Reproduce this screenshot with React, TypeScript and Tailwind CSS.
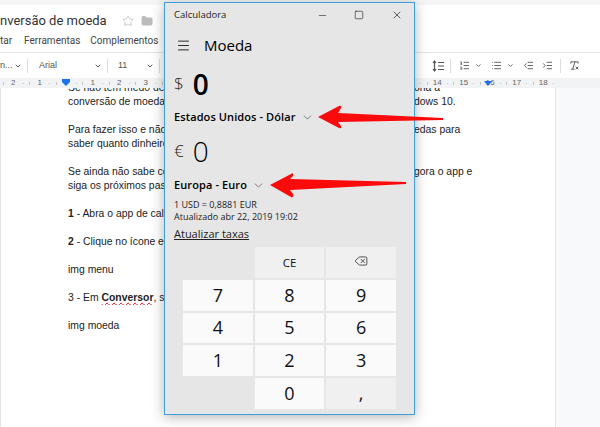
import React from "react";
import { Star, Folder, ChevronDown, Menu, Minus, Square, X, Delete, ListOrdered, List, Indent, Outdent, RemoveFormatting } from "lucide-react";

const docLines: { left: React.ReactNode; right?: string }[] = [
  { left: "Se não tem medo de errar nas contas, pode usar", right: "ona a" },
  { left: "conversão de moeda", right: "dows 10." },
  { left: "" },
  { left: "Para fazer isso e não precisar ficar buscando", right: "edas para" },
  { left: "saber quanto dinheiro" },
  { left: "" },
  { left: "Se ainda não sabe como fazer isso, abra agora", right: "gora o app e" },
  { left: "siga os próximos passos" },
  { left: "" },
  { left: <><b>1</b> - Abra o app de calculadora</> },
  { left: "" },
  { left: <><b>2</b> - Clique no ícone em</> },
  { left: "" },
  { left: "img menu" },
  { left: "" },
  { left: <>3 - Em <b className="font-bold underline decoration-wavy decoration-red-600 decoration-1">Conversor</b>, selecione</> },
  { left: "" },
  { left: "img moeda" },
];

const keys = ["", "CE", "back", "7", "8", "9", "4", "5", "6", "1", "2", "3", "", "0", ","];

function Key({ k }: { k: string }) {
  if (k === "") return <div />;
  const soft = k === "CE" || k === "back" || k === ",";
  return (
    <div className={`flex items-center justify-center ${soft ? "bg-[#f0f0f0]" : "bg-[#fafafa]"} ${k === "CE" ? "text-[11.5px]" : "text-[18px]"} font-medium text-[#111]`}>
      {k === "back" ? <Delete size={14} strokeWidth={1.2} className="mb-[2px]" /> : k}
    </div>
  );
}

const rulerCells = ["2", "1", "", "1", "2", "3", "", "", "", "", "", "", "", "", "", "", "14", "15", "16", "17", "18"];

function Ruler() {
  return (
    <div className="relative flex h-[10px] items-center overflow-hidden bg-[#f1f3f4] text-[8px] leading-[10px] text-[#666]">
      {rulerCells.map((n, i) => (
        <div key={i} className="flex w-[26.5px] flex-none items-center justify-around">
          <i className="h-[3px] w-px bg-[#c4c4c4]" />
          {n ? <span className="w-[9px] text-center">{n}</span> : <i className="w-[9px]" />}
          <i className="h-[1px] w-px bg-[#c4c4c4]" />
        </div>
      ))}
      <svg className="absolute left-[62px] top-[1px]" width="8" height="7" viewBox="0 0 8 7"><path d="M0 0H8V3L4 7L0 3Z" fill="#1a73e8" /></svg>
      <svg className="absolute left-[484px] top-[3px]" width="8" height="5" viewBox="0 0 8 5"><path d="M0 0H8L4 5Z" fill="#1a73e8" /></svg>
    </div>
  );
}

function Sep() {
  return <i className="block h-[14px] w-px flex-none bg-[#dcdcdc]" />;
}

function LineSpacing() {
  return (
    <svg width="12" height="12" viewBox="0 0 12 12" fill="none" stroke="#555" strokeWidth="1.2" className="flex-none">
      <path d="M2.5 1V11M1 3L2.5 1L4 3M1 9L2.5 11L4 9M6 2.5H12M6 6H12M6 9.5H12" />
    </svg>
  );
}

export default function App() {
  return (
    <div className="relative h-[427px] w-[600px] overflow-hidden bg-[#f8f9fa] font-['Liberation_Sans',sans-serif]">
      <div className="h-[5px] bg-[#f5f5f5]" />
      <div className="bg-white">
        <div className="flex h-[30px] items-center pt-[2px] font-['Roboto',sans-serif] text-[13px] text-[#333]">
          <span>nversão de moeda</span>
          <Star size={12} className="ml-[15px] text-[#ccc]" />
          <Folder size={12} fill="#bbb" className="ml-[7px] text-[#bbb]" />
        </div>
        <div className="flex h-[17px] items-center pb-[7px] font-['Roboto',sans-serif] text-[10px] text-[#444]">
          <span>tar</span>
          <span className="ml-[12px]">Ferramentas</span>
          <span className="ml-[10px]">Complementos</span>
          <span className="ml-[243px] text-[#888] underline">ive</span>
        </div>
      </div>
      <div className="flex h-[26px] items-center border-t border-[#e5e5e5] bg-white text-[9px] text-[#555]">
        <span className="w-[14px]">n...</span>
        <ChevronDown size={8} strokeWidth={3} className="flex-none" />
        <i className="ml-[5px]"><Sep /></i>
        <span className="ml-[11px] w-[55px]">Arial</span>
        <ChevronDown size={8} strokeWidth={3} className="flex-none" />
        <i className="ml-[5px]"><Sep /></i>
        <span className="ml-[10px] w-[28px]">11</span>
        <ChevronDown size={8} strokeWidth={3} className="flex-none" />
        <i className="ml-[5px]"><Sep /></i>
        <div className="ml-[272px] flex items-center text-[#555]">
          <LineSpacing />
          <i className="ml-[6px]"><Sep /></i>
          <ListOrdered size={11} className="ml-[8px] flex-none" />
          <ChevronDown size={7} strokeWidth={3} className="ml-[5px] flex-none" />
          <List size={11} className="ml-[9px] flex-none" />
          <ChevronDown size={7} strokeWidth={3} className="ml-[5px] flex-none" />
          <Outdent size={11} className="ml-[9px] flex-none" />
          <Indent size={11} className="ml-[8px] flex-none" />
          <i className="ml-[7px]"><Sep /></i>
          <RemoveFormatting size={11} className="ml-[8px] flex-none" />
        </div>
      </div>
      <Ruler />
      <div className="flex">
        <div className="h-[339px] w-[556px] overflow-hidden border-l border-r border-[#e3e3e3] bg-white pl-[67px] text-[10.4px] leading-[14px] text-[#222]">
          <div className="-mt-[7px]">
            {docLines.map((l, i) => (
              <div key={i} className="flex h-[14px] whitespace-nowrap">
                <div className="w-[346px] overflow-hidden">{l.left}</div>
                {l.right && <div>{l.right}</div>}
              </div>
            ))}
          </div>
        </div>
      </div>

      {/* Calculator window */}
      <div className="absolute left-[164px] top-[2px] flex h-[413px] w-[251px] flex-col border border-[#3ba0dc] bg-[#e6e6e6] font-['Open_Sans',sans-serif] text-black shadow-[0_2px_12px_rgba(0,0,0,0.3)]">
        <div className="flex h-[24px] items-center pl-[9px] text-[9.5px] text-[#222]">
          <span>Calculadora</span>
          <div className="ml-auto flex items-center pr-[11px]">
            <Minus size={11} strokeWidth={1.3} className="mr-[26px]" />
            <Square size={10} strokeWidth={1.5} className="mr-[27px]" />
            <X size={12} strokeWidth={1.4} />
          </div>
        </div>
        <div className="flex h-[36px] items-center pl-[11px]">
          <Menu size={15} strokeWidth={1.3} />
          <span className="ml-[13px] text-[15px]">Moeda</span>
        </div>
        <div className="flex h-[42px] items-center pl-[9px]">
          <span className="text-[17px] font-light text-[#222]">$</span>
          <span className="ml-[9px] text-[28px] font-semibold">0</span>
        </div>
        <div className="flex h-[24px] items-center pl-[9px] text-[11px] font-semibold tracking-[0.1px]">
          <span>Estados Unidos - Dólar</span>
          <ChevronDown size={13} strokeWidth={1.1} className="ml-[5px] text-[#333]" />
        </div>
        <div className="flex h-[44px] items-center pl-[9px]">
          <span className="text-[17px] font-light text-[#222]">€</span>
          <span className="ml-[9px] text-[28px] font-light">0</span>
        </div>
        <div className="flex h-[24px] items-center pl-[9px] text-[11px] font-semibold tracking-[0.1px]">
          <span>Europa - Euro</span>
          <ChevronDown size={13} strokeWidth={1.1} className="ml-[5px] text-[#333]" />
        </div>
        <div className="pl-[9px] pt-[2px] text-[9px] leading-[12px] text-[#222]">
          <div>1 USD = 0,8881 EUR</div>
          <div>Atualizado abr 22, 2019 19:02</div>
        </div>
        <div className="pl-[9px] pt-[3px] text-[11px] leading-[15px] text-[#222]">
          <span className="underline">Atualizar taxas</span>
        </div>
        <div className="ml-[18px] mr-[18px] mt-[6px] grid h-[162px] flex-none grid-cols-3 grid-rows-5 gap-[2px]">
          {keys.map((k, i) => <Key key={i} k={k} />)}
        </div>
      </div>

      {/* Red arrows */}
      <svg className="absolute left-0 top-0" width="600" height="427" viewBox="0 0 600 427">
        <path d="M318 117 L339 106 Q342 105 341 108 L338 113 L443 118 L443 120 L338 122 L341 126 Q342 129 339 128 Z" fill="#fa0a0a" />
        <path d="M270 185 L291 174 Q294 172 293 176 L290 179 L406 182 L406 184 L290 190 L293 194 Q294 198 291 197 Z" fill="#fa0a0a" />
      </svg>
    </div>
  );
}
